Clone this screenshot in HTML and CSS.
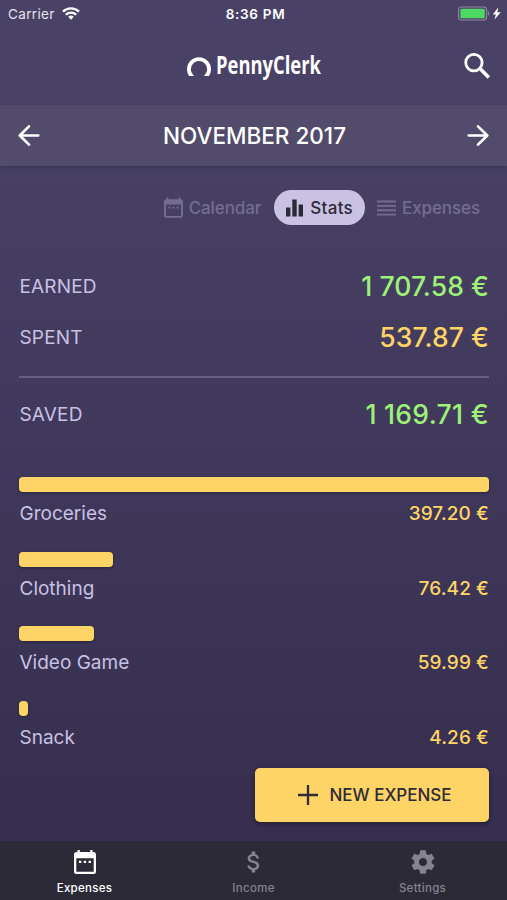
FILE: index.html
```html
<!DOCTYPE html>
<html lang="en">
<head>
<meta charset="utf-8">
<title>PennyClerk</title>
<link rel="stylesheet" href="styles.css">
</head>
<body>
<div class="app">
  <div class="status">
    <div class="carrier"><span>Carrier</span>
      <svg width="18" height="14" viewBox="0 0 18 14" fill="none" stroke="#fff" stroke-width="2.3"><path d="M1 4.700a11.500 11.500 0 0 1 16 0M3.800 7.700a7.400 7.400 0 0 1 10.400 0"/><path d="M9 12.700l-2.800-2.900a4 4 0 0 1 5.600 0z" fill="#fff" stroke="none"/></svg>
    </div>
    <div class="clock">8:36 PM</div>
    <div class="power">
      <svg width="46" height="16" viewBox="0 0 46 16"><rect x="1.600" y="1" width="28" height="13" rx="3" fill="none" stroke="#8d879f" stroke-width="1.2"/><rect x="3.400" y="2.700" width="24.400" height="9.600" rx="1.500" fill="#4cd964"/><path d="M31 5.200c1.600.5 1.600 4.100 0 4.600z" fill="#8d879f"/><path d="M41.400 1.200l-5.600 7.300h3.100l-1.500 5.300 6.300-7.600h-3.400z" fill="#fff"/></svg>
    </div>
  </div>
  <header class="brand">
    <svg class="mark" width="26" height="19" viewBox="0 0 26 19"><circle cx="13" cy="12.300" r="10.100" fill="none" stroke="#fff" stroke-width="3.800"/></svg>
    <span class="wordmark">PennyClerk</span>
    <svg class="search" width="28" height="28" viewBox="0 0 28 28" fill="none" stroke="#fff" stroke-width="2.8"><circle cx="10.900" cy="10.600" r="8.200"/><path d="M17 16.600l8.800 8.900" stroke-width="3.600"/></svg>
  </header>
  <div class="month">
    <svg width="22" height="22" viewBox="0 0 22 22" fill="none" stroke="#fff" stroke-width="2.6" stroke-linecap="round" stroke-linejoin="round"><path d="M20.300 10.500H1.700M11 1.300L1.700 10.500l9.300 9.200"/></svg>
    <span class="month-name">NOVEMBER 2017</span>
    <svg width="22" height="22" viewBox="0 0 22 22" fill="none" stroke="#fff" stroke-width="2.6" stroke-linecap="round" stroke-linejoin="round"><path d="M1.700 10.500h18.600M11 1.300l9.300 9.200-9.300 9.200"/></svg>
  </div>
  <main class="content">
    <div class="views">
      <div class="view">
        <svg width="19" height="21" viewBox="0 0 22 24"><path fill="currentColor" fill-rule="evenodd" d="M3 0h2v2.500h12V0h2v2.500h.5A2.500 2.500 0 0 1 22 5v16.500a2.500 2.500 0 0 1-2.500 2.500h-17A2.500 2.500 0 0 1 0 21.500V5a2.500 2.500 0 0 1 2.500-2.500H3zM2.300 8.500v13.200h17.400V8.500zM5 11h2.300v2.300H5zm4.800 0h2.300v2.300H9.800zm4.800 0h2.300v2.300h-2.300z"/></svg>
        <span class="v1">Calendar</span>
      </div>
      <div class="view active">
        <svg width="17" height="18" viewBox="0 0 17 18" fill="currentColor"><path d="M0 8.500h4.400v9H0zM6.300 .5h4.400v17H6.300zM12.600 5.500H17v12h-4.400z"/></svg>
        <span class="v2">Stats</span>
      </div>
      <div class="view">
        <svg width="19" height="16" viewBox="0 0 19 16" fill="currentColor"><path d="M0 .5h19v1.900H0zM0 4.900h19v1.900H0zM0 9.300h19v1.900H0zM0 13.700h19v1.900H0z"/></svg>
        <span class="v3">Expenses</span>
      </div>
    </div>
    <section class="totals">
      <div class="total"><span class="label">EARNED</span><span class="sum green">1<i class="gap"></i>707.58 €</span></div>
      <div class="total"><span class="label">SPENT</span><span class="sum yellow">537.87 €</span></div>
      <div class="total saved-row"><span class="label">SAVED</span><span class="sum green saved-sum">1<i class="gap"></i>169.71 €</span></div>
    </section>
    <section class="categories">
      <div class="category"><div class="bar" style="width:100%"></div><div class="line"><span>Groceries</span><span class="yellow">397.20 €</span></div></div>
      <div class="category"><div class="bar" style="width:20%"></div><div class="line"><span>Clothing</span><span class="yellow">76.42 €</span></div></div>
      <div class="category"><div class="bar" style="width:16%"></div><div class="line"><span>Video Game</span><span class="yellow">59.99 €</span></div></div>
      <div class="category"><div class="bar" style="width:2%"></div><div class="line"><span>Snack</span><span class="yellow">4.26 €</span></div></div>
    </section>
    <button class="add"><svg width="20" height="20" viewBox="0 0 20 20" stroke="#2d2a38" stroke-width="2.300"><path d="M10 0v20M0 10h20"/></svg><span>NEW EXPENSE</span></button>
  </main>
  <nav class="tabs">
    <div class="tab current">
      <svg width="22" height="24" viewBox="0 0 22 24"><path fill="currentColor" fill-rule="evenodd" d="M3.500 0h2.300v2h10.400V0h2.300v2h1A2.500 2.500 0 0 1 22 4.500v17a2.500 2.500 0 0 1-2.500 2.500h-17A2.500 2.500 0 0 1 0 21.500v-17A2.500 2.500 0 0 1 2.500 2h1zM2.300 8.200v13.500h17.400V8.200zM5 10.800h2.300v2.300H5zm4.800 0h2.300v2.300H9.800zm4.800 0h2.300v2.300h-2.300z"/></svg>
      <span>Expenses</span>
    </div>
    <div class="tab">
      <svg width="28" height="28" viewBox="0 0 24 24" fill="currentColor"><path d="M11.800 10.900c-2.270-.59-3-1.200-3-2.150 0-1.090 1.010-1.850 2.700-1.850 1.780 0 2.440.85 2.500 2.100h2.210c-.07-1.720-1.120-3.300-3.210-3.810V3h-3v2.160c-1.940.42-3.500 1.680-3.500 3.610 0 2.310 1.910 3.460 4.700 4.130 2.500.6 3 1.480 3 2.410 0 .69-.49 1.790-2.700 1.790-2.060 0-2.870-.92-2.980-2.100h-2.200c.12 2.190 1.760 3.420 3.680 3.830V21h3v-2.150c1.950-.37 3.500-1.500 3.500-3.550 0-2.840-2.430-3.810-4.700-4.400z"/></svg>
      <span>Income</span>
    </div>
    <div class="tab">
      <svg width="28" height="28" viewBox="0 0 24 24" fill="currentColor"><path d="M19.430 12.980c.04-.32.07-.64.07-.98s-.03-.66-.07-.98l2.110-1.650c.19-.15.24-.42.12-.64l-2-3.460c-.12-.22-.39-.3-.61-.22l-2.490 1c-.52-.4-1.080-.73-1.690-.98l-.38-2.650C14.460 2.180 14.250 2 14 2h-4c-.25 0-.46.18-.49.42l-.38 2.650c-.61.25-1.170.59-1.690.98l-2.490-1c-.23-.09-.49 0-.61.22l-2 3.460c-.13.22-.07.49.12.64l2.110 1.650c-.04.32-.07.65-.07.98s.03.66.07.98l-2.110 1.650c-.19.15-.24.42-.12.64l2 3.460c.12.22.39.3.61.22l2.490-1c.52.4 1.080.73 1.690.98l.38 2.650c.03.24.24.42.49.42h4c.25 0 .46-.18.49-.42l.38-2.650c.61-.25 1.170-.59 1.690-.98l2.490 1c.23.09.49 0 .61-.22l2-3.460c.12-.22.07-.49-.12-.64l-2.110-1.650zM12 15.500c-1.930 0-3.500-1.570-3.500-3.500s1.570-3.500 3.500-3.500 3.500 1.570 3.500 3.500-1.570 3.500-3.500 3.500z"/></svg>
      <span>Settings</span>
    </div>
  </nav>
</div>
</body>
</html>
```
FILE: styles.css
```css
* { box-sizing: border-box; }
body { margin: 0; font-family: Inter, "Liberation Sans", sans-serif; }
svg { display: block; flex: none; }
.app { width: 507px; height: 900px; display: flex; flex-direction: column; overflow: hidden; background: #4a4266; }
.status { height: 27px; display: grid; grid-template-columns: 1fr auto 1fr; align-items: center; padding: 0 4px 0 8px; color: #fff; font-size: 13.5px; }
.carrier { display: flex; align-items: center; gap: 7px; color: #e6e3ee; letter-spacing: .35px; }
.clock { font-weight: 600; letter-spacing: .7px; }
.power { display: flex; justify-content: flex-end; }
.brand { height: 78px; flex: none; display: grid; grid-template-columns: 186px 30px 1fr 28px; align-items: center; padding-right: 16px; }
.mark { grid-column: 2; }
.wordmark { color: #fff; font: 700 24.5px/30px "Open Sans", sans-serif; transform: scaleX(.75); transform-origin: 0 50%; white-space: nowrap; padding-bottom: 2px; }
.month { height: 61px; flex: none; display: flex; align-items: center; justify-content: space-between; padding: 0 18px; background: #524b6b; color: #fff; font-size: 22.5px; font-weight: 500; box-shadow: 0 1px 3px rgba(30, 22, 50, .35); position: relative; }
.month-name { padding-left: 2px; }
.content { height: 675px; flex: none; padding: 24px 18px 0 19px; background: linear-gradient(#474064, #352e4e); display: flex; flex-direction: column; }
.views { height: 35px; display: flex; justify-content: flex-end; gap: 9px; padding-right: 9px; }
.view { display: flex; align-items: center; gap: 6px; color: #756d91; font-size: 17px; font-weight: 500; }
.view.active { background: #cac2e3; color: #2d2a38; border-radius: 18px; padding: 0 13px 0 12px; margin: 0 3px 0 4px; }
.v1 { letter-spacing: -.1px; }
.v2 { letter-spacing: .3px; padding-left: 1px; margin-right: -1px; }
.v3 { letter-spacing: -.1px; }
.totals { margin-top: 36px; }
.total { height: 51px; display: flex; align-items: center; justify-content: space-between; }
.label { color: #c9c1e4; font-size: 19px; letter-spacing: .15px; padding-left: .5px; }
.sum { font-size: 26.5px; font-weight: 450; letter-spacing: .1px; padding-bottom: 2px; }
.gap { display: inline-block; width: 7px; }
.saved-sum { letter-spacing: .35px; }
.green { color: #9df277; }
.yellow { color: #ffd466; }
.saved-row { height: 75px; margin-top: 13px; border-top: 2px solid #665e83; }
.categories { margin-top: 26px; }
.category { height: 74.5px; }
.bar { height: 15px; border-radius: 4px; background: #ffd466; box-shadow: 0 1px 3px rgba(20, 15, 20, .45); }
.line { display: flex; justify-content: space-between; color: #c9c1e4; font-size: 19px; line-height: 24px; padding: 10px 0 0 .5px; }
.line .yellow { font-weight: 450; letter-spacing: .1px; }
.add { align-self: flex-end; margin-top: -7px; flex: none; width: 234px; height: 54px; border: 0; border-radius: 5px; background: #ffd466; color: #2d2a38; display: flex; align-items: center; justify-content: center; gap: 11px; padding: 0 0 0 6px; font: 500 17px Inter, sans-serif; box-shadow: 0 2px 4px rgba(20, 15, 20, .45); }
.tabs { height: 59px; background: #2d2a38; display: grid; grid-template-columns: 169px 169px 169px; }
.tab { height: 59px; display: grid; grid-template-rows: 42px 10px; align-content: start; justify-items: center; align-items: center; color: #87828f; font-size: 11.5px; font-weight: 500; letter-spacing: .3px; }
.tab.current { color: #fff; }
```
